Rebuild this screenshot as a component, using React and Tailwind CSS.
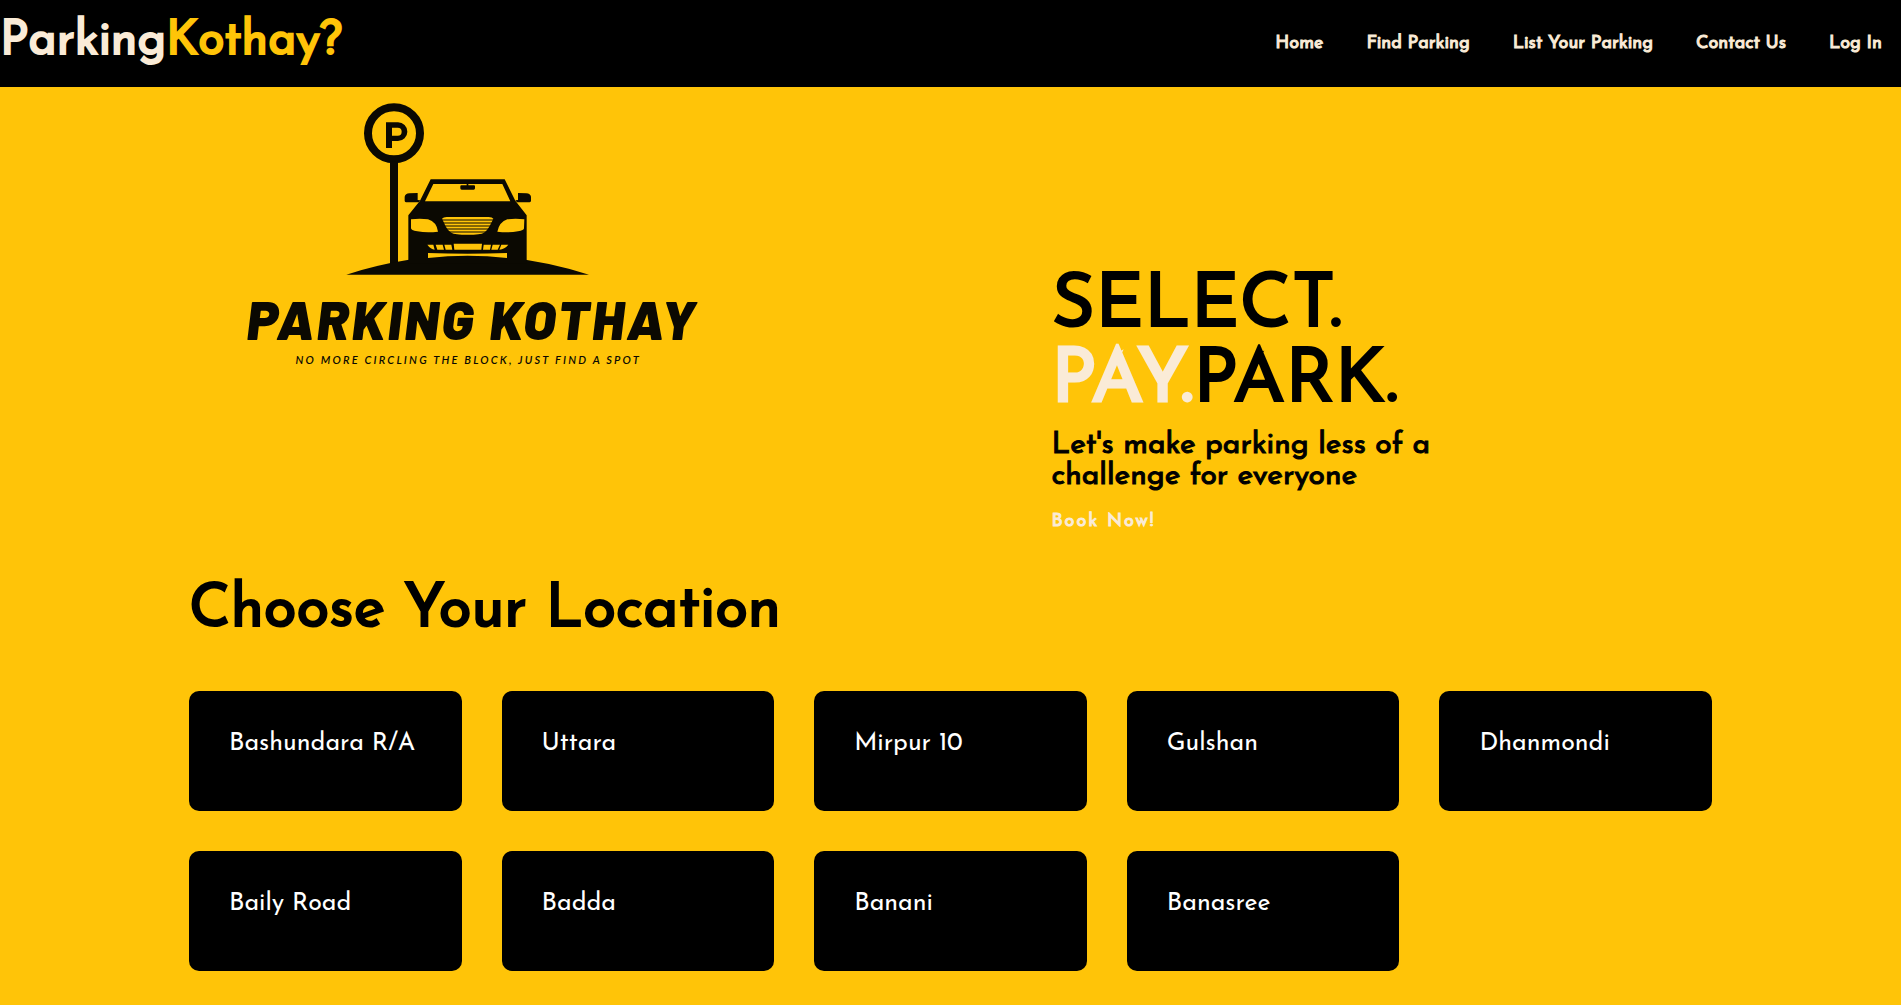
const NAV = ["Home", "Find Parking", "List Your Parking", "Contact Us", "Log In"];

const LOCATIONS = [
  "Bashundara R/A",
  "Uttara",
  "Mirpur 10",
  "Gulshan",
  "Dhanmondi",
  "Baily Road",
  "Badda",
  "Banani",
  "Banasree",
];

function CarSign() {
  return (
    <svg viewBox="30 30 768 528" className="h-44 w-64 text-[#0b0902]" fill="currentColor" aria-hidden="true">
      <circle cx="192" cy="130" r="78" fill="none" stroke="currentColor" strokeWidth="24" />
      <path fillRule="evenodd" d="M168 97h36a28 28 0 0 1 0 56h-18v21h-18zM186 113v24h17a12 12 0 0 0 0-24z" />
      <rect x="180" y="215" width="24" height="310" />
      <path d="M49 554Q230 496 413 496Q596 496 777 554Z" />
      <path fillRule="evenodd" d="M302 268H524L556 332L590 376V520H235V376L270 332ZM310 282L285 334H541L517 282Z" />
      <path d="M224 332V320Q226 311 238 310L263 309V330L271 331L266 337H228Q224 336 224 332ZM603 332V320Q601 311 589 310L564 309V330L556 331L561 337H599Q603 336 603 332Z" />
      <path d="M410 280h5v6h17q3 0 3 3v6q0 4-4 4h-36q-4 0-4-4v-6q0-3 3-3h16z" />
      <g fill="#ffc408">
        <path d="M243 388Q270 384 294 388Q320 396 324 425Q290 429 262 424Q242 421 243 414Z" />
        <path d="M583 388Q556 384 532 388Q508 396 502 425Q536 429 564 424Q583 421 582 414Z" />
        <path d="M336 386Q340 382 350 381H476Q487 382 490 386L484 398Q474 420 462 428Q452 434 413 434Q374 434 364 428Q350 419 342 398Z" />
        <path d="M292 464H310L314 479Q302 478 292 464ZM317 464H338L342 479H322ZM343 464H364L367 479H347ZM371 461H456L454 479H373ZM461 464H483L480 479H459ZM488 464H510L503 479H484ZM514 464H535Q524 478 508 479Z" />
        <path d="M294 489Q413 493 531 489V504Q413 490 294 504Z" />
      </g>
      <path
        d="M336 390H490M339 399H487M344 408H483M349 417H477M357 426H468"
        stroke="currentColor"
        strokeWidth="3"
        fill="none"
      />
    </svg>
  );
}

export default function App() {
  return (
    <div className="min-h-screen bg-[#ffc408] pb-8 font-['Josefin_Sans',Lato,sans-serif] text-black">
      <header className="flex h-[87px] items-center justify-between bg-black pr-[19px]">
        <a href="#home" className="pb-1 text-[48px] leading-none [-webkit-text-stroke:2px] text-[#faebd7]">
          Parking<span className="text-[#ffc408]">Kothay?</span>
        </a>
        <nav className="flex gap-[43px] text-lg [-webkit-text-stroke:1px] text-[#faebd7]">
          {NAV.map((item) => (
            <a key={item} href="#nav">
              {item}
            </a>
          ))}
        </nav>
      </header>

      <main>
        <section className="grid grid-cols-2">
          <div className="flex flex-col items-center pt-[13px] pr-[14px] text-[#0b0902]">
            <CarSign />
            <p className="mt-4 pl-2 font-['Barlow','Roboto',sans-serif] text-[54px] leading-none font-black tracking-wider whitespace-nowrap italic">
              PARKING KOTHAY
            </p>
            <p className="mt-1.5 font-['Lato',sans-serif] text-[11px] leading-4 font-semibold tracking-[0.2em] whitespace-nowrap italic">
              NO MORE CIRCLING THE BLOCK, JUST FIND A SPOT
            </p>
          </div>
          <div className="pt-[183px] pl-[101px]">
            <h1 className="text-[75px] leading-[75px] [-webkit-text-stroke:2px]">
              SELECT.
              <br />
              <span className="text-[#faebd7] [-webkit-text-stroke:3px]">PAY.</span>PARK.
            </h1>
            <p className="mt-2.5 text-[30px] leading-[31px] [-webkit-text-stroke:1px]">
              Let's make parking less of a<br />
              challenge for everyone
            </p>
            <a href="#book" className="mt-4 inline-block text-lg [-webkit-text-stroke:1px] tracking-[2px] text-[#faebd7]">
              Book Now!
            </a>
          </div>
        </section>

        <section className="px-[189px]">
          <h2 className="mt-10 text-[60px] leading-[70px] [-webkit-text-stroke:2px]">Choose Your Location</h2>
          <div className="mt-[45px] grid grid-cols-5 gap-10">
            {LOCATIONS.map((name) => (
              <a key={name} href="#location" className="h-[120px] rounded-[10px] bg-black p-10 text-[25px] leading-none text-white whitespace-nowrap">
                {name}
              </a>
            ))}
          </div>
        </section>
      </main>
    </div>
  );
}
